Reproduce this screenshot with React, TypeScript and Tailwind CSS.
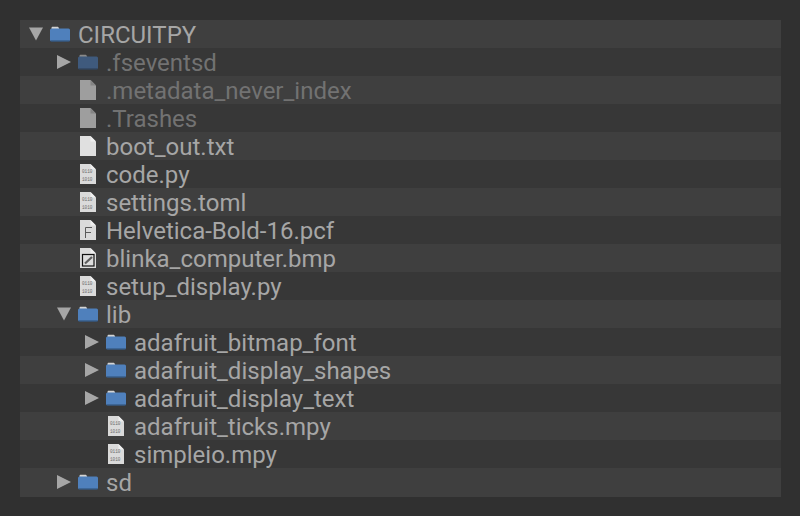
import React from 'react';

type Kind = 'folder' | 'blank' | 'binary' | 'font' | 'image';

interface Row {
  name: string;
  depth: number;
  kind: Kind;
  open?: boolean;
  dim?: boolean;
}

const rows: Row[] = [
  { name: 'CIRCUITPY', depth: 0, kind: 'folder', open: true },
  { name: '.fseventsd', depth: 1, kind: 'folder', open: false, dim: true },
  { name: '.metadata_never_index', depth: 1, kind: 'blank', dim: true },
  { name: '.Trashes', depth: 1, kind: 'blank', dim: true },
  { name: 'boot_out.txt', depth: 1, kind: 'blank' },
  { name: 'code.py', depth: 1, kind: 'binary' },
  { name: 'settings.toml', depth: 1, kind: 'binary' },
  { name: 'Helvetica-Bold-16.pcf', depth: 1, kind: 'font' },
  { name: 'blinka_computer.bmp', depth: 1, kind: 'image' },
  { name: 'setup_display.py', depth: 1, kind: 'binary' },
  { name: 'lib', depth: 1, kind: 'folder', open: true },
  { name: 'adafruit_bitmap_font', depth: 2, kind: 'folder', open: false },
  { name: 'adafruit_display_shapes', depth: 2, kind: 'folder', open: false },
  { name: 'adafruit_display_text', depth: 2, kind: 'folder', open: false },
  { name: 'adafruit_ticks.mpy', depth: 2, kind: 'binary' },
  { name: 'simpleio.mpy', depth: 2, kind: 'binary' },
  { name: 'sd', depth: 1, kind: 'folder', open: false },
];

const Arrow = ({ open }: { open: boolean }) => (
  <svg width="14" height="14" viewBox="0 0 14 14" className="shrink-0">
    {open ? <path d="M0 0.5h14L7 13.5z" fill="#a6a6a6" /> : <path d="M0 0l14 7L0 14z" fill="#a6a6a6" />}
  </svg>
);

const FolderIcon = ({ dim }: { dim?: boolean }) => (
  <svg width="20" height="16" viewBox="0 0 20 16" className="shrink-0">
    <path d="M1.5 3.5V2C1.5 1.2 2 .8 2.8 .8h4.4c.8 0 1.2.4 1.5 1l.8 1.7z" fill={dim ? '#8a8a8a' : '#d4d4d4'} />
    <rect x="0" y="2.6" width="20" height="12.6" rx="1.5" fill={dim ? '#3f5a7d' : '#4f80bc'} />
    <rect x="0.6" y="14.4" width="19" height="1.2" fill={dim ? '#2f4158' : '#33557f'} />
  </svg>
);

const FileIcon = ({ kind, dim }: { kind: Kind; dim?: boolean }) => {
  const fill = dim ? '#9e9e9e' : kind === 'blank' ? '#e0e0e0' : '#dadada';
  return (
    <svg width="16" height="20" viewBox="0 0 16 20" className="shrink-0">
      <path d="M0 0h10.5L16 5.5V20H0z" fill={fill} />
      <path d="M10.5 0L16 5.5H10.5z" fill={dim ? '#848484' : '#efefef'} />
      {kind === 'binary' && (
        <g fontFamily="'Liberation Mono', monospace" fontSize="5" fill="#6a6a6a">
          <text x="2" y="9" textLength="10.5" lengthAdjust="spacingAndGlyphs">0110</text>
          <text x="2" y="17" textLength="10.5" lengthAdjust="spacingAndGlyphs">1010</text>
        </g>
      )}
      {kind === 'font' && <path d="M5.5 18V7.5h6.5M5.5 12.5h5.5" stroke="#5a5a5a" strokeWidth="1" fill="none" />}
      {kind === 'image' && (
        <g>
          <rect x="2.5" y="6.5" width="11.5" height="11.5" fill="#dcdcdc" stroke="#111111" strokeWidth="1.2" />
          <path d="M5 15.5L12 9" stroke="#5c5c5c" strokeWidth="2.2" />
        </g>
      )}
    </svg>
  );
};

const App = () => {
  return (
    <div className="w-[800px] h-[516px] bg-[#303030] pt-5 pl-5 font-['Roboto',sans-serif] overflow-hidden">
      <div className="w-[761px] flex flex-col">
        {rows.map((row, i) => (
          <div
            key={row.name}
            className={`flex items-start ${i === rows.length - 1 ? 'h-[29px]' : 'h-[28px]'} ${i % 2 === 0 ? 'bg-[#3f3f3f]' : 'bg-[#373737]'}`}
          >
            <div className={row.depth === 0 ? 'w-[9px] shrink-0' : row.depth === 1 ? 'w-[37px] shrink-0' : 'w-[65px] shrink-0'} />
            <div className="w-[21px] h-[28px] shrink-0 flex items-center">
              {row.kind === 'folder' && <Arrow open={!!row.open} />}
            </div>
            <div className="w-[28px] h-[28px] shrink-0 flex items-center">
              {row.kind === 'folder' ? (
                <FolderIcon dim={row.dim} />
              ) : (
                <div className="pl-[2px] flex">
                  <FileIcon kind={row.kind} dim={row.dim} />
                </div>
              )}
            </div>
            <span className={`text-[24px] leading-[30px] whitespace-nowrap ${row.dim ? 'text-[#727272]' : 'text-[#a6a6a6]'}`}>
              {row.name}
            </span>
          </div>
        ))}
      </div>
    </div>
  );
};

export default App;
